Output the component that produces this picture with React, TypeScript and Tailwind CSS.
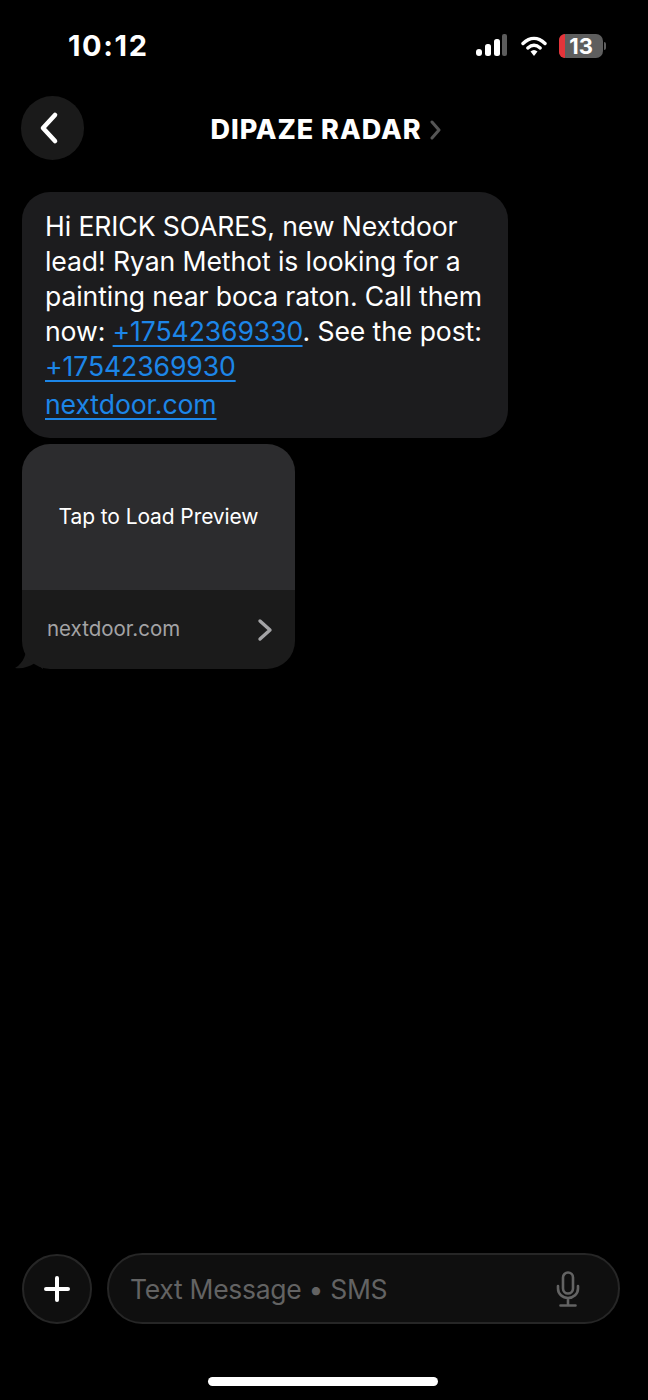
import React from 'react';

const font = { fontFamily: '"Inter", "Liberation Sans", sans-serif' };

function StatusIcons() {
  return (
    <div className="flex items-center">
      <svg width="34" height="24" viewBox="0 0 34 24">
        <rect x="1" y="15" width="6" height="7" rx="3" fill="#fff" />
        <rect x="10" y="10" width="6" height="12" rx="2.5" fill="#fff" />
        <rect x="19" y="5" width="6" height="17" rx="2.5" fill="#fff" />
        <rect x="27" y="0" width="5" height="22" rx="2" fill="#5c5c5c" />
      </svg>
      <svg className="ml-[12px]" width="26" height="22" viewBox="0 0 26 22">
        <path d="M2 8.5C9 1.8 17 1.8 24 8.5" fill="none" stroke="#fff" strokeWidth="3.4" strokeLinecap="round" />
        <path d="M6.8 13C10.8 9.5 15.2 9.5 19.2 13" fill="none" stroke="#fff" strokeWidth="3.4" strokeLinecap="round" />
        <path d="M9.5 16.6C11.8 14.6 14.2 14.6 16.5 16.6L13 21Z" fill="#fff" />
      </svg>
      <div className="relative ml-[12px] flex h-[24px] w-[44px] items-center justify-center rounded-[7px] bg-[#5e5e5e]">
        <div className="absolute inset-y-0 left-0 w-[6px] rounded-l-[7px] bg-[#e5343a]" />
        <span className="relative text-[22px] leading-[24px] font-bold text-white">13</span>
      </div>
      <div className="ml-[1px] h-[8px] w-[2px] rounded-r-full bg-[#5e5e5e]" />
    </div>
  );
}

function Link({ children }: { children: React.ReactNode }) {
  return <span className="text-[#1c86e8] underline decoration-[2px] underline-offset-[4px]">{children}</span>;
}

export default function App() {
  return (
    <div className="flex h-[1400px] w-[648px] flex-col overflow-hidden bg-black text-white" style={font}>
      {/* status bar */}
      <div className="flex h-[92px] items-start justify-between pt-[29px] pr-[42px] pl-[68px]">
        <span className="text-[29px] leading-[34px] font-bold tracking-[1.6px]">10:12</span>
        <div className="pt-[5px]">
          <StatusIcons />
        </div>
      </div>

      {/* header */}
      <div className="relative flex h-[76px] items-center justify-center">
        <div className="absolute top-[4px] left-[21px] flex h-[64px] w-[63px] items-center justify-center rounded-full bg-[#1a1a1a]">
          <svg className="mr-[8px]" width="24" height="34" viewBox="0 0 24 34">
            <path d="M18 4L6 17L18 30" fill="none" stroke="#fff" strokeWidth="4.6" strokeLinecap="round" strokeLinejoin="round" />
          </svg>
        </div>
        <div className="flex items-center pl-[5px]">
          <span className="text-[27px] leading-[32px] font-extrabold tracking-[0.95px]">DIPAZE RADAR</span>
          <svg className="ml-[9px]" width="12" height="20" viewBox="0 0 12 20">
            <path d="M2 2L9 10L2 18" fill="none" stroke="#555" strokeWidth="3" strokeLinecap="round" strokeLinejoin="round" />
          </svg>
        </div>
      </div>

      {/* messages */}
      <div className="flex flex-1 flex-col items-start pt-[24px] pl-[22px]">
        <div className="w-[486px] rounded-[28px] bg-[#1c1c1e] pt-[17px] pr-[10px] pb-[16px] pl-[23px] text-[26.6px] leading-[35px] tracking-[-0.1px]">
          <p>Hi ERICK SOARES, new Nextdoor</p>
          <p>lead! Ryan Methot is looking for a</p>
          <p>painting near boca raton. Call them</p>
          <p>
            now: <Link>+17542369330</Link>. See the post:
          </p>
          <p>
            <Link>+17542369930</Link>
          </p>
          <p className="mt-[3px]">
            <Link>nextdoor.com</Link>
          </p>
        </div>

        <div className="relative mt-[6px]">
          <svg className="absolute bottom-0 left-[-7px]" width="28" height="28" viewBox="0 0 28 28">
            <path d="M12 0C12 12 9 22 0 27C7 28 14 26 20 22L28 28V0Z" fill="#1b1b1b" />
          </svg>
          <div className="relative w-[273px] overflow-hidden rounded-[28px]">
            <div className="flex h-[146px] items-center justify-center bg-[#2c2c2e] text-[21px] leading-[26px] font-normal tracking-[-0.1px]">
              Tap to Load Preview
            </div>
            <div className="flex h-[79px] items-center justify-between bg-[#1b1b1b] pr-[22px] pl-[25px]">
              <span className="text-[20.5px] text-[#a3a3a5]">nextdoor.com</span>
              <svg width="16" height="24" viewBox="0 0 16 24">
                <path d="M3 3L13 12L3 21" fill="none" stroke="#a3a3a5" strokeWidth="3.4" strokeLinecap="round" strokeLinejoin="round" />
              </svg>
            </div>
          </div>
        </div>
      </div>

      {/* input row */}
      <div className="flex items-center gap-[15px] pr-[28px] pl-[22px]">
        <div className="flex h-[70px] w-[70px] shrink-0 items-center justify-center rounded-full border-2 border-[#262626] bg-[#0f0f0f]">
          <svg width="28" height="28" viewBox="0 0 28 28">
            <path d="M14 3V25M3 14H25" fill="none" stroke="#fff" strokeWidth="4" strokeLinecap="round" />
          </svg>
        </div>
        <div className="flex h-[71px] flex-1 items-center justify-between rounded-full border-2 border-[#262626] bg-[#0f0f0f] pr-[37px] pl-[21px]">
          <span className="pt-[2px] text-[26.5px] tracking-[-0.3px] text-[#636363]">Text Message • SMS</span>
          <svg width="26" height="36" viewBox="0 0 26 36">
            <rect x="8" y="1.5" width="10" height="21" rx="5" fill="none" stroke="#636363" strokeWidth="2.6" />
            <path d="M3 15V17.5C3 23 7.5 27 13 27C18.5 27 23 23 23 17.5V15M13 27V34M5.5 34.5H20.5" fill="none" stroke="#636363" strokeWidth="2.6" strokeLinecap="round" />
          </svg>
        </div>
      </div>

      {/* home indicator */}
      <div className="flex h-[76px] items-end justify-center pr-[2px] pb-[14px]">
        <div className="h-[9px] w-[230px] rounded-full bg-white" />
      </div>
    </div>
  );
}
